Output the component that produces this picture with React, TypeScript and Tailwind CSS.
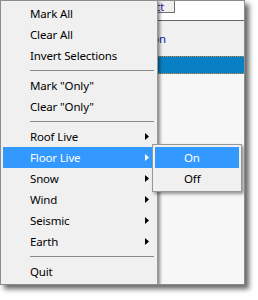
import React from "react";

type Item =
  | { kind: "item"; label: string; sub?: boolean; active?: boolean }
  | { kind: "sep" };

const menuItems: Item[] = [
  { kind: "item", label: "Mark All" },
  { kind: "item", label: "Clear All" },
  { kind: "item", label: "Invert Selections" },
  { kind: "sep" },
  { kind: "item", label: 'Mark "Only"' },
  { kind: "item", label: 'Clear "Only"' },
  { kind: "sep" },
  { kind: "item", label: "Roof Live", sub: true },
  { kind: "item", label: "Floor Live", sub: true, active: true },
  { kind: "item", label: "Snow", sub: true },
  { kind: "item", label: "Wind", sub: true },
  { kind: "item", label: "Seismic", sub: true },
  { kind: "item", label: "Earth", sub: true },
  { kind: "sep" },
  { kind: "item", label: "Quit" },
];

const Arrow = ({ white }: { white?: boolean }) => (
  <svg width="4" height="7" viewBox="0 0 4 7" className="shrink-0">
    <path d="M0 0 L4 3.5 L0 7 Z" fill={white ? "#ffffff" : "#000000"} />
  </svg>
);

const MenuRow = ({ label, sub, active }: { label: string; sub?: boolean; active?: boolean }) => (
  <div
    className={`h-[21px] flex items-center justify-between pl-[27px] pr-[6px] ${
      active ? "bg-[#3399ff] text-white" : "text-black"
    }`}
  >
    <span className="leading-none">{label}</span>
    {sub && <Arrow white={active} />}
  </div>
);

export default function App() {
  return (
    <div className="w-[258px] h-[300px] bg-white font-['Noto_Sans',sans-serif] text-[11.5px] tracking-[-0.15px]">
      <div className="relative w-[245px] h-[285px] border border-[#8c8c8c] bg-[#f7f7f7] shadow-[4px_4px_5px_rgba(0,0,0,0.6)] overflow-hidden">
        {/* app content behind the menu */}
        <div className="flex flex-col">
          <div className="h-[20px] bg-white border-b border-[#646464] flex items-start">
            <div className="ml-[90px] w-[84px] h-[13px] -mt-[1px] border border-[#707070] bg-[#f0f0f0] flex items-center justify-end pr-[10px] text-[#1a1ab0] text-[11px] leading-none">
              <span>Select</span>
            </div>
          </div>
          <div className="h-[35px] bg-[#f0f0f0] flex items-center justify-end pr-[78px] text-[#1a1ab0]">
            Combination
          </div>
          <div className="h-[18px] bg-[#0a80c4] border-y border-dotted border-[#d8863a]" />
        </div>

        {/* main popup menu */}
        <div className="absolute left-[-1px] top-[-1px] w-[158px] bg-[#f0f0f0] border border-[#979797] p-[2px] shadow-[2px_2px_3px_rgba(0,0,0,0.45)]">
          {menuItems.map((it, i) =>
            it.kind === "sep" ? (
              <div key={i} className="h-[9px] flex items-center pl-[27px] pr-[1px]">
                <div className="w-full h-px bg-[#8a8a8a]" />
              </div>
            ) : (
              <MenuRow key={i} label={it.label} sub={it.sub} active={it.active} />
            )
          )}
        </div>

        {/* submenu */}
        <div className="absolute left-[151px] top-[143px] w-[90px] bg-[#f0f0f0] border border-[#979797] p-[2px] shadow-[2px_2px_3px_rgba(0,0,0,0.4)]">
          <div className="h-[21px] flex items-center pl-[29px] bg-[#3399ff] text-white">
            <span className="leading-none">On</span>
          </div>
          <div className="h-[21px] flex items-center pl-[29px] text-black">
            <span className="leading-none">Off</span>
          </div>
        </div>
      </div>
    </div>
  );
}
